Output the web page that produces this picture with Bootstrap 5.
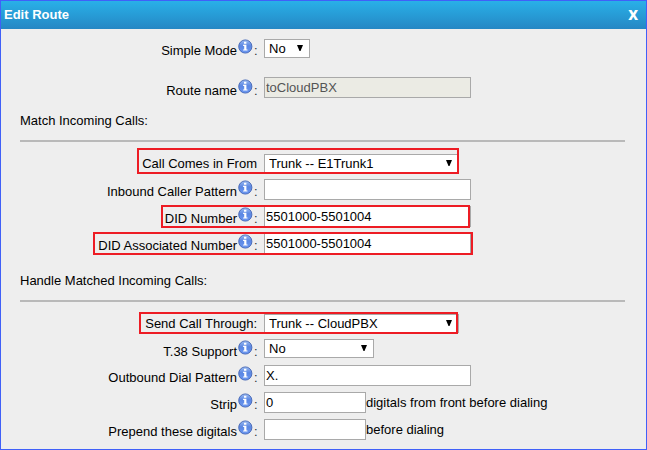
<!DOCTYPE html>
<html lang="en">
<head>
<meta charset="utf-8">
<meta name="viewport" content="width=device-width, initial-scale=1">
<title>Edit Route</title>
<link href="https://cdn.jsdelivr.net/npm/bootstrap@5.3.0/dist/css/bootstrap.min.css" rel="stylesheet">
<style>
body { font: 13px/15px "Liberation Sans", Arial, sans-serif; color: #000; }
.dialog { width: 647px; height: 450px; background: #eee; border: 1px solid #4060f8; }
.dialog-head { height: 28px; padding: 0 8px 1px 3px; background: linear-gradient(#29b0e8, #2587c4); }
.close-x { font: bold 17px/20px "Open Sans", "Liberation Sans", sans-serif; background: none; margin-top: -1px; }
.route-row { height: 21px; margin-bottom: 6px; }
.pick-row { height: 19px; }
.route-label { width: 256px; padding-top: 5px; margin-right: 7px; }
.up-1 .route-label { padding-top: 4px; }
.down-1 .route-label { padding-top: 6px; }
.up-3 .route-label { padding-top: 2px; }
.info { width: 15px; height: 15px; margin: -4px 0 0 1px; flex: none; }
.colon { width: 4px; text-indent: 1px; color: #333; }
.field { height: 21px; width: 207px; padding: 0 1px; border: 1px solid #a9a9a9; border-radius: 0; font: inherit; line-height: 18px; color: #000; background: #fff; }
.field:disabled { background: #ebebe4; color: #545454; }
.field-short { width: 102px; }
.pick { height: 19px; width: 195px; padding: 0 20px 0 4px; border: 1px solid #a9a9a9; border-radius: 0; font: inherit; line-height: 17px; color: #000; background: #fff url("data:image/svg+xml,%3Csvg xmlns='http://www.w3.org/2000/svg' width='6' height='6'%3E%3Cpath d='M0 0h6L3.5 6h-1z'/%3E%3C/svg%3E") no-repeat right 6px top 5px / 6px 6px; }
.pick-xs { width: 46px; }
.pick-sm { width: 110px; }
.after { padding-top: 3px; }
.section-title { padding: 1px 0 0 19px; }
.rule { height: 2px; margin: 12px 21px 12px 19px; background: #b9b9b9; }
.row-mode { margin-top: 10px; margin-bottom: 19px; }
.row-name { margin-bottom: 14px; }
.row-last { margin-bottom: 18px; }
.row-t38 { margin-bottom: 7px; }
.callout { position: absolute; border: 2px solid #ed1c24; pointer-events: none; }
.c-from { left: 136px; top: -6px; width: 322px; height: 26px; }
.c-did { left: 160px; top: -1px; width: 309px; height: 23px; }
.c-assoc { left: 92px; top: -1px; width: 380px; height: 23px; }
.c-send { left: 138px; top: -2px; width: 319px; height: 22px; }
</style>
</head>
<body>
<svg class="position-absolute" width="0" height="0" aria-hidden="true">
  <defs>
    <linearGradient id="ball" x1="0" y1="0" x2="0" y2="1"><stop offset="0" stop-color="#9cbcf2"/><stop offset=".45" stop-color="#5b87e3"/><stop offset="1" stop-color="#6c98f2"/></linearGradient>
  </defs>
  <symbol id="info" viewBox="0 0 15 15">
    <circle cx="7.3" cy="7.5" r="6.6" fill="url(#ball)" stroke="#4566b4" stroke-width=".9"/>
    <path fill="#fff" d="M6 2.8h2.4v2H6zM5.1 5.8h3.3v4.6h1.1v1.2H5.1v-1.2h1.1V7H5.1z"/>
  </symbol>
</svg>
<main class="dialog overflow-hidden">
  <header class="dialog-head d-flex align-items-center justify-content-between text-white fw-bold">
    <span>Edit Route</span>
    <button type="button" class="close-x border-0 p-0 text-white" aria-label="Close">x</button>
  </header>
  <form>
    <div class="route-row pick-row up-1 row-mode d-flex">
      <label class="route-label d-flex justify-content-end">Simple Mode<svg class="info"><use href="#info"/></svg><span class="colon">:</span></label>
      <select class="pick pick-xs form-select"><option>No</option></select>
    </div>
    <div class="route-row down-1 row-name d-flex">
      <label class="route-label d-flex justify-content-end">Route name<svg class="info"><use href="#info"/></svg><span class="colon">:</span></label>
      <input class="field form-control" value="toCloudPBX" disabled>
    </div>
    <div class="section-title">Match Incoming Calls:</div>
    <div class="rule"></div>
    <div class="route-row pick-row up-3 position-relative d-flex">
      <label class="route-label text-end">Call Comes in From</label>
      <select class="pick form-select"><option>Trunk -- E1Trunk1</option></select>
      <span class="callout c-from"></span>
    </div>
    <div class="route-row d-flex">
      <label class="route-label d-flex justify-content-end">Inbound Caller Pattern<svg class="info"><use href="#info"/></svg><span class="colon">:</span></label>
      <input class="field form-control">
    </div>
    <div class="route-row position-relative d-flex">
      <label class="route-label d-flex justify-content-end">DID Number<svg class="info"><use href="#info"/></svg><span class="colon">:</span></label>
      <input class="field form-control" value="5501000-5501004">
      <span class="callout c-did"></span>
    </div>
    <div class="route-row position-relative row-last d-flex">
      <label class="route-label d-flex justify-content-end">DID Associated Number<svg class="info"><use href="#info"/></svg><span class="colon">:</span></label>
      <input class="field form-control" value="5501000-5501004">
      <span class="callout c-assoc"></span>
    </div>
    <div class="section-title">Handle Matched Incoming Calls:</div>
    <div class="rule"></div>
    <div class="route-row pick-row up-3 position-relative d-flex">
      <label class="route-label text-end">Send Call Through:</label>
      <select class="pick form-select"><option>Trunk -- CloudPBX</option></select>
      <span class="callout c-send"></span>
    </div>
    <div class="route-row pick-row row-t38 d-flex">
      <label class="route-label d-flex justify-content-end">T.38 Support<svg class="info"><use href="#info"/></svg><span class="colon">:</span></label>
      <select class="pick pick-sm form-select"><option>No</option></select>
    </div>
    <div class="route-row d-flex">
      <label class="route-label d-flex justify-content-end">Outbound Dial Pattern<svg class="info"><use href="#info"/></svg><span class="colon">:</span></label>
      <input class="field form-control" value="X.">
    </div>
    <div class="route-row d-flex">
      <label class="route-label d-flex justify-content-end">Strip<svg class="info"><use href="#info"/></svg><span class="colon">:</span></label>
      <input class="field field-short form-control" value="0">
      <span class="after">digitals from front before dialing</span>
    </div>
    <div class="route-row d-flex">
      <label class="route-label d-flex justify-content-end">Prepend these digitals<svg class="info"><use href="#info"/></svg><span class="colon">:</span></label>
      <input class="field field-short form-control">
      <span class="after">before dialing</span>
    </div>
  </form>
</main>
<script src="https://cdn.jsdelivr.net/npm/bootstrap@5.3.0/dist/js/bootstrap.bundle.min.js"></script>
</body>
</html>
